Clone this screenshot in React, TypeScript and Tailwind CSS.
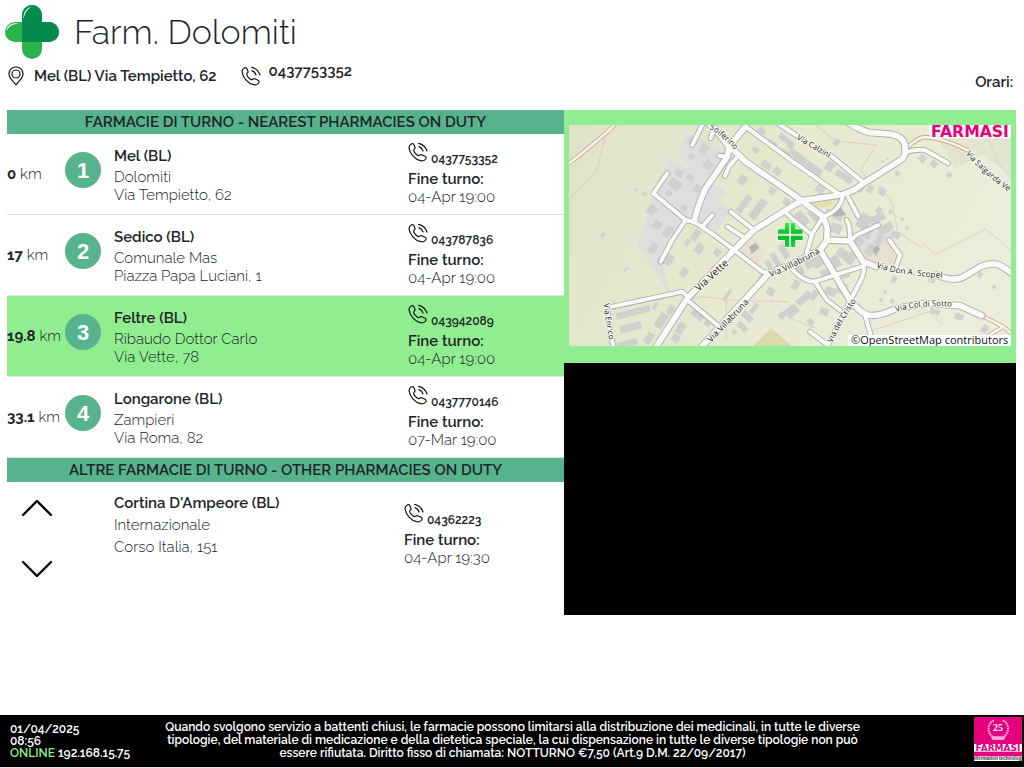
import React from "react";

type Pharmacy = {
  km: string;
  town: string;
  name: string;
  address: string;
  phone: string;
  until: string;
  active?: boolean;
};

const nearest: Pharmacy[] = [
  { km: "0", town: "Mel (BL)", name: "Dolomiti", address: "Via Tempietto, 62", phone: "0437753352", until: "04-Apr 19:00" },
  { km: "17", town: "Sedico (BL)", name: "Comunale Mas", address: "Piazza Papa Luciani, 1", phone: "043787836", until: "04-Apr 19:00" },
  { km: "19.8", town: "Feltre (BL)", name: "Ribaudo Dottor Carlo", address: "Via Vette, 78", phone: "043942089", until: "04-Apr 19:00", active: true },
  { km: "33.1", town: "Longarone (BL)", name: "Zampieri", address: "Via Roma, 82", phone: "0437770146", until: "07-Mar 19:00" },
];

function PhoneIcon() {
  return (
    <svg className="h-5 w-5 shrink-0" viewBox="0 0 60 60" fill="none" stroke="#111" strokeWidth="3.6" strokeLinecap="round" strokeLinejoin="round" aria-hidden="true">
      <path d="M10 6C14 4 17 5 18 9L21 16C22 19 20 21 18 22C16 24 17 27 20 32C24 37 28 40 31 41C34 42 35 39 37 38C39 37 41 38 43 39L51 43C55 45 55 48 53 51C50 56 44 57 38 56C20 52 5 34 3 17C3 12 6 8 10 6Z" />
      <path d="M33 14C39 16 43 20 45 27M32 4C44 7 53 15 57 27" />
    </svg>
  );
}

function PinIcon() {
  return (
    <svg className="h-5 w-4 shrink-0" viewBox="0 0 48 60" fill="none" stroke="#111" strokeWidth="3.6" strokeLinejoin="round" aria-hidden="true">
      <path d="M24 57C20 48 3 39 3 24C3 11 12 3 24 3C36 3 45 11 45 24C45 39 28 48 24 57Z" />
      <circle cx="24" cy="24" r="12" />
    </svg>
  );
}

function CrossLogo() {
  return (
    <svg className="h-[54px] w-[54px] shrink-0" viewBox="0 0 54 54" aria-hidden="true">
      <rect x="17" y="0" width="20" height="54" rx="10" fill="#29b34b" />
      <rect x="0" y="17" width="54" height="20" rx="10" fill="#29b34b" />
      <path d="M17 10a10 10 0 0 1 20 0v7h7a10 10 0 0 1 0 20H17z" fill="#048b4b" />
      <path d="M18.500 14C18 8 21 3 27 1.500C22 4 20 8 18.500 14Z" fill="#e6fff0" />
      <path d="M1.500 26C2 20 7 17.500 14 18.500C8 19 4 21 1.500 26Z" fill="#e6fff0" />
    </svg>
  );
}

function DutyInfo({ phone, until }: { phone: string; until: string }) {
  return (
    <div className="text-[15px] leading-[18px]">
      <div className="flex h-7 gap-[3px]">
        <PhoneIcon />
        <span className="self-end text-xs leading-[22px] font-semibold">{phone}</span>
      </div>
      <p className="font-semibold">Fine turno:</p>
      <p className="font-light">{until}</p>
    </div>
  );
}

function Bar({ children }: { children: React.ReactNode }) {
  return (
    <h2 className="h-6 bg-[#57b38e] text-center text-[15px] leading-6 font-semibold whitespace-nowrap">{children}</h2>
  );
}

function PharmacyRow({ item, index }: { item: Pharmacy; index: number }) {
  return (
    <li className={item.active ? "flex h-[81px] border-b border-[#ddd] bg-[#90ee90]" : "flex h-[81px] border-b border-[#ddd]"}>
      <p className="w-[58px] shrink-0 self-center text-[15px] leading-[18px] font-light whitespace-nowrap">
        <b className="font-bold">{item.km}</b> km
      </p>
      <span className="mt-[18px] flex h-9 w-9 shrink-0 items-center justify-center rounded-full bg-[#57b38e] font-['Liberation_Sans',sans-serif] text-[22px] font-bold text-white">
        {index}
      </span>
      <div className="min-w-0 flex-1 pt-[13px] pl-[13px] text-[15px] leading-[18px] font-light">
        <h3 className="mb-[3px] font-semibold">{item.town}</h3>
        <p>{item.name}</p>
        <p>{item.address}</p>
      </div>
      <div className="w-[28%] shrink-0 pt-2">
        <DutyInfo phone={item.phone} until={item.until} />
      </div>
    </li>
  );
}

const majorRoads = [
  "M415 -8L440 15L480 65L510 90L530 110L675 210L698 227L763 275L775 310L773 345",
  "M260 668L355 520L495 375L555 315L675 240L698 227L813 210Q850 203 883 175L988 110Q1012 95 1008 75Q1012 35 963 27L903 23Q870 15 838 -8",
  "M530 5L480 65L475 95L410 190Q392 225 375 290",
  "M395 668L600 445L663 420L753 375L775 345L843 348L883 410L923 425M1103 450Q1160 475 1193 450L1235 425Q1275 408 1300 425L1330 445",
  "M753 375L798 450L843 525Q870 560 895 570Q930 577 983 550L1063 535L1173 542L1238 572",
];

const minorRoads = [
  "M402 -5L370 60",
  "M437 5L425 40",
  "M450 92L475 95",
  "M510 90L480 125L468 153",
  "M530 5L675 112L813 210",
  "M625 -6L683 32M783 90L883 172",
  "M295 145L253 205L350 285L375 290L435 330L495 375L580 440L600 445",
  "M350 285L310 345L275 410",
  "M430 270L400 305",
  "M485 260L555 315",
  "M475 305L530 340",
  "M1008 85Q1030 72 1068 75L1138 115",
  "M763 275Q815 255 821 212",
  "M838 217L868 275",
  "M653 265L663 275L723 325",
  "M763 275L730 325L713 385",
  "M833 285Q845 305 843 348",
  "M928 300L863 330L843 348",
  "M883 410Q890 440 873 470L845 525L773 668",
  "M878 425L798 450L738 470Q700 470 663 425",
  "M738 470L773 525L813 555",
  "M888 570L905 630",
  "M723 620L778 662",
  "M961 345L993 390L981 425",
  "M355 515L340 500L115 548L125 630L135 670",
  "M355 525L445 600",
];

const brownRoads = ["M140 -5Q110 30 0 115", "M1012 72Q1040 38 1070 36Q1130 42 1198 77", "M1238 572L1303 605L1330 628M1303 605L1258 632"];

const trails = [
  "M107 40L83 138L0 223",
  "M740 0L800 48L923 60L875 135L895 165",
  "M920 180L963 220Q980 270 985 320L1060 370",
  "M1260 40L1285 110L1326 160",
  "M1060 355L1100 388L1250 312L1330 380",
  "M355 525L400 515L500 527L660 530M472 525V650",
  "M900 620L1080 560L1120 600",
  "M663 580L740 610",
];

const blocks = [
  "M355 25L460 70L500 95L430 165L380 155L325 85Z",
  "M300 100L410 160L470 200L415 265L375 290L455 230L480 260L435 330L350 285L253 205L275 150Z",
  "M253 205L350 285L275 410L310 520L205 360L235 270Z",
  "M370 210L460 250L435 320L375 290Z",
];

const buildings = [
  [370, 50, 26, 22, 35], [405, 72, 22, 26, 35], [417, 120, 26, 26, 35], [368, 95, 18, 16, 30], [330, 145, 22, 20, 30],
  [318, 178, 36, 28, 35], [364, 158, 22, 18, 30], [385, 190, 18, 24, 35], [300, 205, 18, 16, 35], [248, 255, 26, 30, 38],
  [345, 250, 20, 18, 30], [265, 300, 26, 24, 38], [296, 320, 22, 36, 30], [380, 330, 20, 36, 35], [520, 165, 24, 28, 35],
  [525, 237, 20, 58, 38], [567, 252, 24, 68, 38], [578, 18, 24, 18, 38], [608, 57, 20, 32, 125], [648, 85, 20, 32, 125],
  [592, 120, 20, 30, 125], [625, 138, 24, 22, 38], [560, 75, 20, 16, 38], [645, 40, 36, 18, 35], [610, 198, 20, 20, 38],
  [652, 230, 20, 20, 38], [200, 195, 8, 8, 20], [227, 207, 12, 9, 20], [102, 330, 12, 16, 35], [171, 433, 8, 18, 50],
  [390, 372, 24, 30, 38], [445, 382, 22, 22, 38], [345, 442, 20, 28, 38], [252, 370, 22, 32, 30], [300, 405, 24, 34, 30],
  [355, 352, 14, 20, 38], [192, 562, 104, 20, -14], [185, 607, 66, 22, -14], [175, 655, 60, 18, -14], [277, 587, 26, 50, 33],
  [258, 543, 10, 24, 35], [305, 555, 18, 28, 38], [240, 640, 22, 34, 33], [335, 610, 24, 34, 33], [320, 640, 24, 24, 33],
  [385, 572, 42, 18, 38], [415, 595, 20, 16, 38], [475, 510, 10, 40, 38], [605, 500, 24, 24, 30], [535, 575, 20, 36, -45],
  [520, 605, 18, 34, -45], [555, 550, 14, 34, 40], [495, 620, 14, 14, 40], [655, 560, 18, 60, 55], [620, 405, 18, 46, -30],
  [645, 380, 20, 46, -30], [600, 420, 16, 30, -30], [645, 340, 16, 40, -40], [688, 95, 60, 20, 38], [735, 130, 56, 20, 35],
  [782, 125, 26, 30, 35], [825, 155, 56, 20, 32], [755, 190, 26, 30, 40], [803, 52, 16, 22, 35], [665, 60, 20, 22, 38],
  [872, 190, 22, 20, 40], [903, 192, 18, 22, 35], [940, 200, 22, 22, 35], [925, 155, 14, 10, 35], [985, 145, 14, 14, 35],
  [1060, 100, 22, 20, 38], [1095, 117, 20, 18, 38], [1140, 150, 16, 14, 30], [940, 110, 8, 7, 0], [955, 102, 6, 5, 0],
  [700, 280, 24, 46, -42], [735, 270, 24, 36, -42], [795, 270, 54, 18, 28], [675, 320, 40, 18, 40], [800, 310, 34, 30, 20],
  [885, 290, 36, 46, 30], [925, 280, 48, 24, -25], [950, 310, 24, 46, 60], [890, 325, 32, 28, 30], [930, 255, 16, 20, 30],
  [965, 260, 12, 14, 30], [1000, 282, 10, 10, 30], [1015, 310, 10, 8, 30], [980, 330, 26, 18, 30], [820, 385, 34, 26, 35],
  [845, 400, 26, 36, 35], [800, 410, 26, 36, -30], [745, 405, 36, 44, -30], [715, 410, 22, 44, -30], [690, 435, 26, 34, -30],
  [770, 445, 30, 26, -20], [830, 450, 24, 18, -20], [680, 480, 20, 30, 30], [705, 520, 22, 50, 50], [670, 560, 24, 40, 50],
  [735, 510, 20, 30, 40], [785, 500, 34, 24, 20], [818, 490, 30, 34, 20], [765, 560, 26, 22, 20], [725, 590, 20, 16, 45],
  [905, 375, 26, 34, 35], [870, 350, 28, 24, 35], [930, 345, 20, 30, 30], [975, 463, 14, 20, 30], [1087, 465, 22, 14, 20],
  [1233, 450, 14, 16, 40], [1275, 486, 12, 10, 40], [1098, 560, 30, 16, 15], [1170, 575, 26, 18, 15], [1247, 612, 18, 24, 35],
  [948, 502, 10, 10, 30], [936, 525, 10, 10, 30], [970, 528, 12, 12, 30], [540, 505, 10, 16, 40], [580, 455, 14, 24, 40],
];

function StreetMap() {
  return (
    <svg className="block w-full bg-[#e6e8cf] font-['Open_Sans',sans-serif]" viewBox="0 0 1326 663" role="img" aria-label="Map of Mel">
      <defs>
        <linearGradient id="land" x1="0" y1="0" x2="1" y2="0.3">
          <stop offset="0" stopColor="#e0e2ca" />
          <stop offset="0.45" stopColor="#e6e8ce" />
          <stop offset="1" stopColor="#ebedda" />
        </linearGradient>
        <linearGradient id="green" x1="0" y1="0" x2="0" y2="1">
          <stop offset="0" stopColor="#39ee35" />
          <stop offset="0.5" stopColor="#04b82c" />
          <stop offset="1" stopColor="#12d832" />
        </linearGradient>
        <path id="solferino" d="M421 12Q450 20 540 120" />
        <path id="calzini" d="M682 42L805 114" />
        <path id="salgarda" d="M1190 86Q1245 152 1345 218" />
        <path id="vette" d="M389 500L520 380" />
        <path id="bruna1" d="M605 456Q660 438 790 362" />
        <path id="bruna2" d="M426 653L600 470" />
        <path id="scopel" d="M921 427Q1000 455 1150 460" />
        <path id="sotto" d="M982 561Q1050 535 1200 548" />
        <path id="cristo" d="M790 655Q820 580 890 490" />
        <path id="enrico" d="M104 536Q108 590 128 680" />
      </defs>
      <rect width="1326" height="663" fill="url(#land)" />
      <path d="M1080 0H1326V150L1240 90L1160 130Z" fill="#dedfca" opacity=".6" />
      <path d="M555 663L607 612L665 663Z" fill="#d9dca7" stroke="#d5bfa0" strokeWidth="2" />
      <path d="M525 350L555 340L590 375L560 420L510 390ZM890 350L965 345L990 390L978 425L880 410Z" fill="#eadfd3" />
      <path d="M850 340L900 300L990 320L960 350L900 400L850 350Z" fill="#dedede" />
      <g fill="#dddedd">
        {blocks.map((d) => (
          <path key={d} d={d} />
        ))}
      </g>
      <path d="M725 230L808 222L785 245L745 248Z" fill="#e6e2ae" />
      <g fill="none" stroke="#d4cdbd" strokeWidth="2.5">
        {trails.map((d) => (
          <path key={d} d={d} />
        ))}
      </g>
      <g fill="#d0d1cf">
        {buildings.map(([x, y, w, h, r], i) => (
          <rect key={i} x={x - w / 2} y={y - h / 2} width={w} height={h} transform={`rotate(${r} ${x} ${y})`} />
        ))}
      </g>
      <path d="M780 268L810 240L832 270L800 275ZM540 365l20 -10 12 14 -24 18zM910 375l15 -14 8 10 -12 22z" fill="#b5b5b5" />
      <g fill="none" strokeLinecap="round" strokeLinejoin="round">
        <g stroke="#c7a98e" strokeWidth="13">{brownRoads.map((d) => <path key={d} d={d} />)}</g>
        <g stroke="#fbf3e8" strokeWidth="8">{brownRoads.map((d) => <path key={d} d={d} />)}</g>
        <g stroke="#a9a9a9" strokeWidth="17">{minorRoads.map((d) => <path key={d} d={d} />)}</g>
        <g stroke="#a9a9a9" strokeWidth="22">{majorRoads.map((d) => <path key={d} d={d} />)}</g>
        <g stroke="#fafafa" strokeWidth="12">{minorRoads.map((d) => <path key={d} d={d} />)}</g>
        <g stroke="#fafafa" strokeWidth="17">{majorRoads.map((d) => <path key={d} d={d} />)}</g>
      </g>
      <g fill="#222" stroke="#f6f6ee" strokeWidth="7" strokeLinejoin="round" paintOrder="stroke" fontSize="24">
        <text><textPath href="#solferino">Solferino</textPath></text>
        <text><textPath href="#calzini">Via Calzini</textPath></text>
        <text><textPath href="#salgarda">Via Salgarda Ve</textPath></text>
        <text fontSize="30"><textPath href="#vette">Via Vette</textPath></text>
        <text fontSize="26"><textPath href="#bruna1">Via Villabruna</textPath></text>
        <text fontSize="26"><textPath href="#bruna2">Via Villabruna</textPath></text>
        <text fontSize="25"><textPath href="#scopel">Via Don A. Scopel</textPath></text>
        <text><textPath href="#sotto">Via Col di Sotto</textPath></text>
        <text><textPath href="#cristo">Via del Cristo</textPath></text>
        <text><textPath href="#enrico">Via Enrico</textPath></text>
      </g>
      <path
        d="M648 293h13v33h-34v-13h21zM666 293h13v20h22v13h-35zM627 332h34v34h-13v-21h-21zM666 332h35v13h-22v21h-13z"
        fill="url(#green)"
        stroke="#fff"
        strokeWidth="3"
        paintOrder="stroke"
      />
      <rect x="1081" y="0" width="245" height="40" fill="#fff" fillOpacity=".85" />
      <text x="1203" y="37" textAnchor="middle" fontSize="47" fontWeight="bold" fill="#e6007e" className="font-['DejaVu_Sans',sans-serif]">FARMASI</text>
      <rect x="837" y="630" width="489" height="33" fill="#fff" />
      <text x="846" y="657" fontSize="33" fill="#111">©OpenStreetMap contributors</text>
    </svg>
  );
}

function FarmasiBadge() {
  return (
    <svg className="h-11 w-12 shrink-0" viewBox="0 0 144 132" role="img" aria-label="Farmasi information technology">
      <rect width="144" height="132" fill="#e6007e" />
      <g fill="none" stroke="#f9b9da" strokeWidth="6" strokeDasharray="5 2">
        <path d="M60 10C38 20 38 50 60 62M86 10C108 20 108 50 84 62" />
      </g>
      <path d="M50 58H96L90 69H56Z" fill="#f7a6d0" />
      <text x="72" y="42" textAnchor="middle" fontSize="30" fill="#fff" className="font-['Liberation_Serif',serif]">25</text>
      <rect y="81" width="144" height="23" fill="#fff" />
      <text x="72" y="102" textAnchor="middle" fontSize="27" fontWeight="bold" fill="#e6007e" className="font-['DejaVu_Sans',sans-serif]">FARMASI</text>
      <rect y="118" width="144" height="14" fill="#fff" />
      <text x="72" y="129" textAnchor="middle" fontSize="14" fill="#333" className="font-['Liberation_Sans',sans-serif]">information technology</text>
    </svg>
  );
}

function Chevron({ d }: { d: string }) {
  return (
    <svg className="h-[18px] w-8" viewBox="0 0 32 18" fill="none" stroke="#000" strokeWidth="2.4" strokeLinecap="round" strokeLinejoin="round" aria-hidden="true">
      <path d={d} />
    </svg>
  );
}

export default function App() {
  return (
    <div className="flex min-h-screen flex-col bg-white font-[Raleway,Lato,sans-serif] text-[#212529] oldstyle-nums">
      <header className="flex h-[110px] items-end justify-between pr-[11px] pl-[5px]">
        <div className="h-full pt-[5px]">
          <div className="flex items-center gap-[15px]">
            <CrossLogo />
            <h1 className="text-[34px] leading-10 font-light">Farm. Dolomiti</h1>
          </div>
          <div className="flex items-center pt-1.5 pl-[3px] text-[15px] leading-[22px] font-semibold">
            <PinIcon />
            <span className="ml-2.5">Mel (BL) Via Tempietto, 62</span>
            <span className="ml-6 flex items-start gap-2">
              <PhoneIcon />
              <span className="-mt-1.5">0437753352</span>
            </span>
          </div>
        </div>
        <p className="pb-[17px] text-[15px] leading-[22px] font-semibold">Orari:</p>
      </header>

      <main className="flex items-start pr-2 pl-[7px]">
        <section className="min-w-0 flex-[557]">
          <Bar>FARMACIE DI TURNO - NEAREST PHARMACIES ON DUTY</Bar>
          <ul>
            {nearest.map((item, i) => (
              <PharmacyRow key={item.town} item={item} index={i + 1} />
            ))}
          </ul>
          <Bar>ALTRE FARMACIE DI TURNO - OTHER PHARMACIES ON DUTY</Bar>
          <div className="flex">
            <div className="flex w-[107px] shrink-0 flex-col items-start gap-[43px] pt-[17px] pl-3.5">
              <button type="button" aria-label="Previous" className="flex">
                <Chevron d="M2 16L16 2L30 16" />
              </button>
              <button type="button" aria-label="Next" className="flex">
                <Chevron d="M2 2L16 16L30 2" />
              </button>
            </div>
            <div className="min-w-0 flex-1 pt-2.5 text-[15px] leading-[22px] font-light">
              <h3 className="font-semibold">Cortina D'Ampeore (BL)</h3>
              <p>Internazionale</p>
              <p>Corso Italia, 151</p>
            </div>
            <div className="w-[160px] shrink-0 pt-[21px]">
              <DutyInfo phone="04362223" until="04-Apr 19:30" />
            </div>
          </div>
        </section>
        <section className="min-w-0 flex-[452]">
          <div className="bg-[#90ee90] px-[5px] pt-[15px] pb-[17px]">
            <StreetMap />
          </div>
          <div className="h-[252px] bg-black" />
        </section>
      </main>

      <footer className="mt-auto flex items-start justify-between border-b border-[#e5e5e5] bg-black pr-0.5 pl-2.5 text-xs font-semibold text-white">
        <div className="w-[150px] shrink-0 pt-2 leading-3">
          <p>01/04/2025</p>
          <p>08:56</p>
          <p>
            <span className="text-[#90ee90]">ONLINE</span> 192.168.15.75
          </p>
        </div>
        <p className="w-[705px] pt-1.5 text-center leading-[13px]">
          Quando svolgono servizio a battenti chiusi, le farmacie possono limitarsi alla distribuzione dei medicinali, in tutte le diverse
          tipologie, del materiale di medicazione e della dietetica speciale, la cui dispensazione in tutte le diverse tipologie non può
          essere rifiutata. Diritto fisso di chiamata: NOTTURNO €7,50 (Art.9 D.M. 22/09/2017)
        </p>
        <div className="flex h-[52px] w-[157px] shrink-0 justify-end pt-0.5">
          <FarmasiBadge />
        </div>
      </footer>
    </div>
  );
}
